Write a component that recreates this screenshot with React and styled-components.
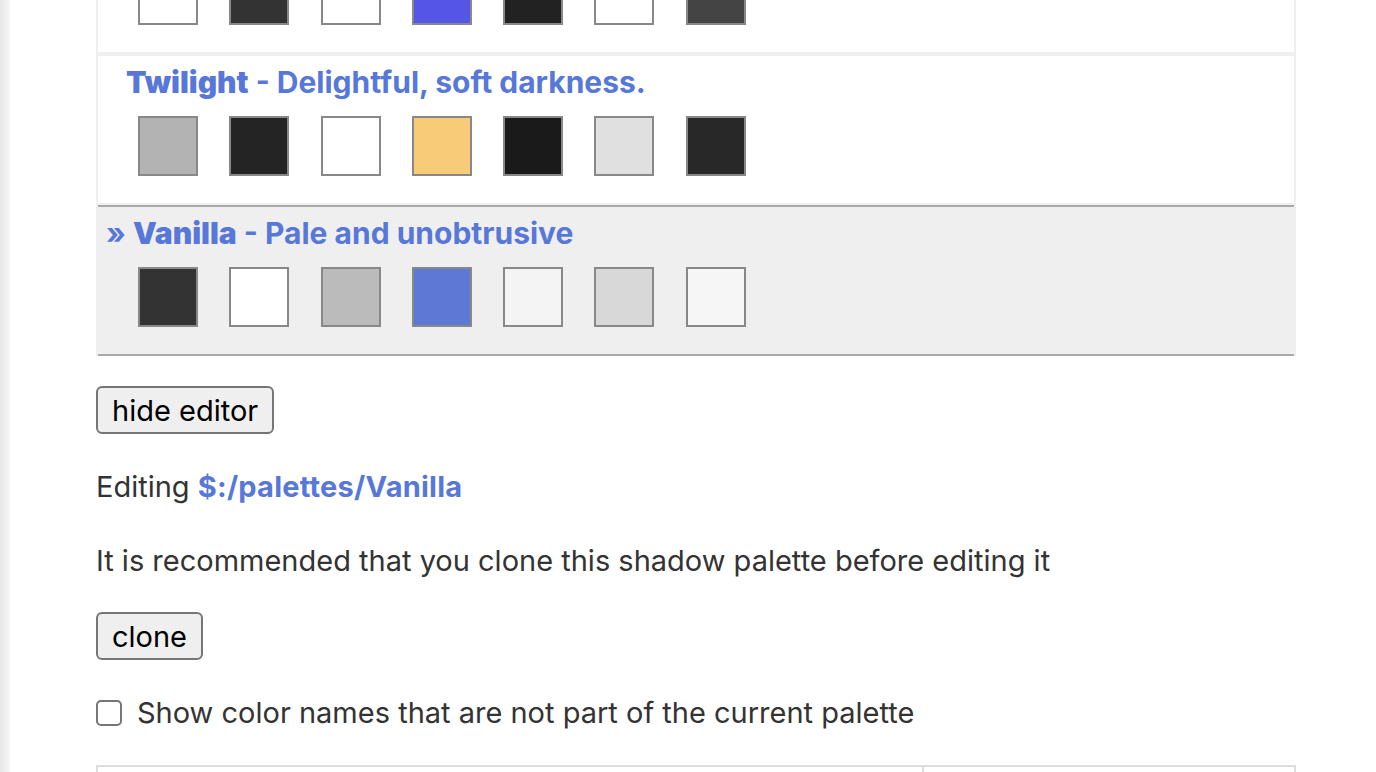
import React from 'react'
import styled, { createGlobalStyle } from 'styled-components'

const GlobalStyle = createGlobalStyle`
  html, body {
    margin: 0;
    height: 100%;
    overflow: hidden;
  }

  body {
    background: linear-gradient(to right, #e6e6e6, #f7f7f7 10px, #ffffff 10px);
    font-family: Inter, "Noto Sans", "Liberation Sans", sans-serif;
    color: #333333;
  }
`

const Frame = styled.div`
  margin-left: 10px;
  padding-left: 86px;
  min-height: 100vh;
  background: #ffffff;
`

// the tiddler is scrolled, so the first palette sits partly above the fold
const Chooser = styled.div`
  box-sizing: border-box;
  width: 1200px;
  margin-top: -97px;
  border-left: 2px solid #efefef;
  border-right: 2px solid #efefef;
`

const Item = styled.div`
  padding: 6px 4px 27px 28px;
  border-top: 2px solid ${({ chosen }) => (chosen ? '#a9a9a9' : '#efefef')};
  border-bottom: 2px solid ${({ chosen }) => (chosen ? '#a9a9a9' : '#efefef')};
  background: ${({ chosen }) => (chosen ? '#efefef' : '#ffffff')};
`

const Title = styled.a`
  display: block;
  font-size: 30px;
  line-height: 40px;
  font-weight: 700;
  color: #5778d8;
  text-decoration: none;
  white-space: nowrap;

  > strong {
    font-weight: 900;
  }
`

const Chevron = styled.span`
  margin-left: -20px;
`

const Swatches = styled.div`
  display: flex;
  gap: 31.3px;
  margin-top: 14px;
  padding-left: 12px;
`

const Swatch = styled.div`
  box-sizing: border-box;
  width: 60px;
  height: 60px;
  border: 2px solid #888888;
  background: ${({ colour }) => colour};
`

const Button = styled.button`
  display: block;
  box-sizing: border-box;
  height: 48px;
  margin-top: ${({ top }) => top}px;
  padding: 0 14px;
  border: 2px solid #767676;
  border-radius: 6px;
  background: #efefef;
  color: #000000;
  font-family: inherit;
  font-size: 29px;
`

const Para = styled.p`
  margin: ${({ top }) => top}px 0 0;
  font-size: 29px;
  line-height: 40px;
  white-space: nowrap;
`

const Link = styled.a`
  color: #5778d8;
  font-weight: 700;
  text-decoration: none;
  letter-spacing: 0.2px;
`

const CheckRow = styled.label`
  display: flex;
  align-items: center;
  gap: 15px;
  margin-top: 33px;
  font-size: 29px;
  line-height: 40px;
`

const Check = styled.input`
  appearance: none;
  box-sizing: border-box;
  width: 26px;
  height: 26px;
  margin: 0;
  border: 2px solid #767676;
  border-radius: 5px;
  background: #ffffff;
`

const Table = styled.table`
  width: 1200px;
  margin-top: 32px;
  border-collapse: collapse;

  td {
    height: 120px;
    border: 2px solid #dddddd;
  }

  td:first-child {
    width: 822px;
  }
`

const palettes = [
  {
    name: 'Spartan Day',
    description: 'Cold, spartan day colours',
    colours: ['#ffffff', '#333333', '#ffffff', '#5555e8', '#222222', '#ffffff', '#444444'],
  },
  {
    name: 'Twilight',
    description: 'Delightful, soft darkness.',
    colours: ['#b3b3b3', '#242424', '#ffffff', '#f7cb77', '#1a1a1a', '#e0e0e0', '#282828'],
  },
  {
    name: 'Vanilla',
    description: 'Pale and unobtrusive',
    colours: ['#333333', '#ffffff', '#bbbbbb', '#5d78d5', '#f4f4f4', '#d8d8d8', '#f6f6f6'],
    chosen: true,
  },
]

const App = () => (
  <>
    <GlobalStyle />
    <Frame>
      <Chooser>
        {palettes.map(palette => (
          <Item key={palette.name} chosen={palette.chosen}>
            <Title href="#">
              {palette.chosen && <Chevron>» </Chevron>}
              <strong>{palette.name}</strong> - {palette.description}
            </Title>
            <Swatches>
              {palette.colours.map((colour, i) => (
                <Swatch key={i} colour={colour} />
              ))}
            </Swatches>
          </Item>
        ))}
      </Chooser>
      <Button top={30}>hide editor</Button>
      <Para top={33}>
        Editing <Link href="#">$:/palettes/Vanilla</Link>
      </Para>
      <Para top={34}>It is recommended that you clone this shadow palette before editing it</Para>
      <Button top={31}>clone</Button>
      <CheckRow>
        <Check type="checkbox" />
        Show color names that are not part of the current palette
      </CheckRow>
      <Table>
        <tbody>
          <tr>
            <td />
            <td />
          </tr>
        </tbody>
      </Table>
    </Frame>
  </>
)

export default App
